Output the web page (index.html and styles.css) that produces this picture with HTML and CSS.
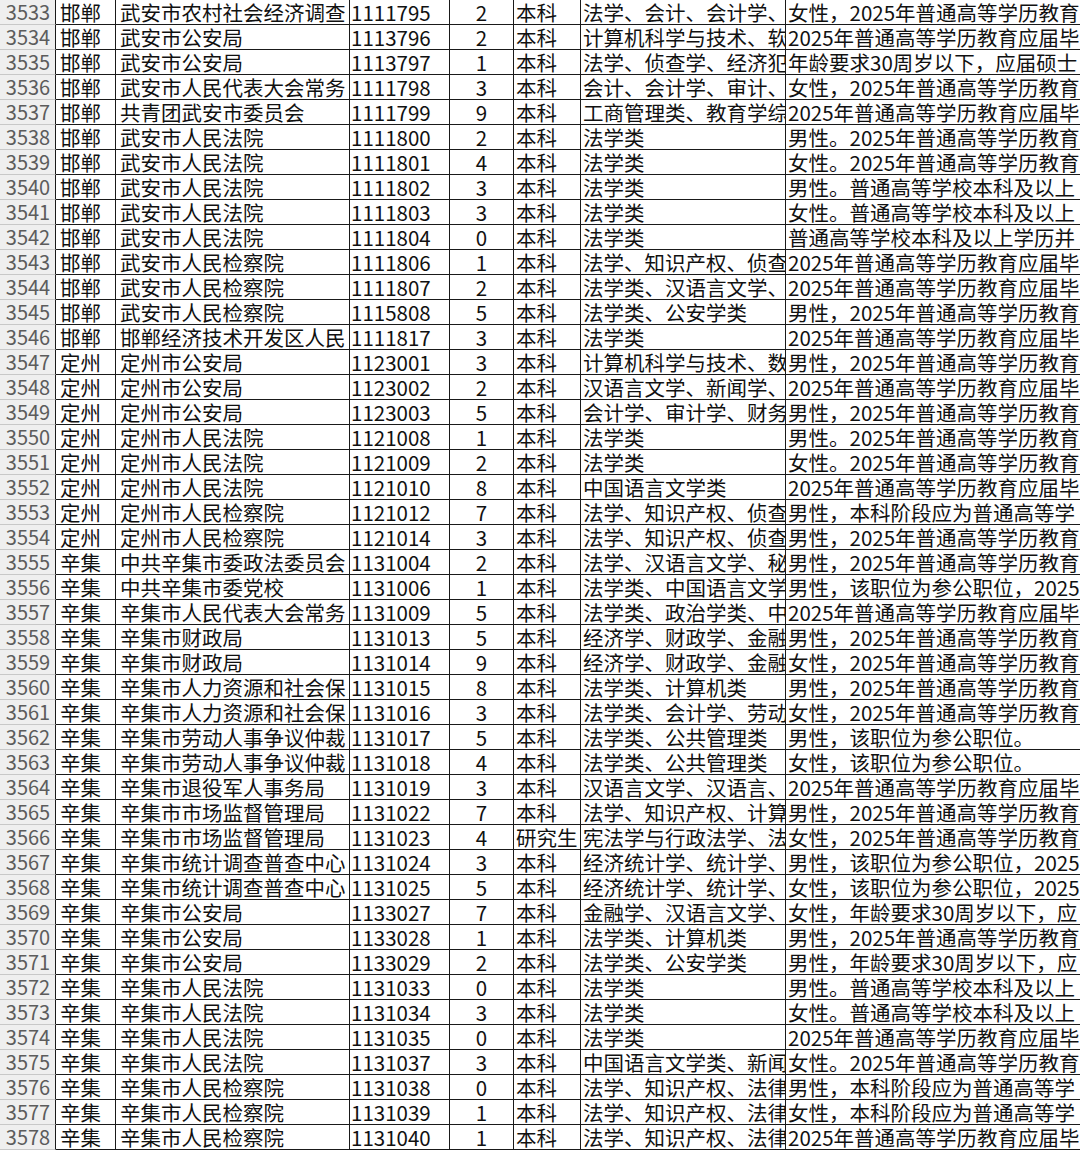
FILE: index.html
```html
<!DOCTYPE html>
<html lang="zh-CN">
<head>
<meta charset="utf-8">
<title>表格</title>
<link rel="stylesheet" href="styles.css">
</head>
<body>
<div class="sheet">
<div class="row"><div class="c c0">3533</div><div class="c c1">邯郸</div><div class="c c2">武安市农村社会经济调查</div><div class="c c3">1111795</div><div class="c c4">2</div><div class="c c5">本科</div><div class="c c6">法学、会计、会计学、</div><div class="c c7">女性，2025年普通高等学历教育</div></div>
<div class="row"><div class="c c0">3534</div><div class="c c1">邯郸</div><div class="c c2">武安市公安局</div><div class="c c3">1113796</div><div class="c c4">2</div><div class="c c5">本科</div><div class="c c6">计算机科学与技术、软</div><div class="c c7">2025年普通高等学历教育应届毕</div></div>
<div class="row"><div class="c c0">3535</div><div class="c c1">邯郸</div><div class="c c2">武安市公安局</div><div class="c c3">1113797</div><div class="c c4">1</div><div class="c c5">本科</div><div class="c c6">法学、侦查学、经济犯</div><div class="c c7">年龄要求30周岁以下，应届硕士</div></div>
<div class="row"><div class="c c0">3536</div><div class="c c1">邯郸</div><div class="c c2">武安市人民代表大会常务</div><div class="c c3">1111798</div><div class="c c4">3</div><div class="c c5">本科</div><div class="c c6">会计、会计学、审计、</div><div class="c c7">女性，2025年普通高等学历教育</div></div>
<div class="row"><div class="c c0">3537</div><div class="c c1">邯郸</div><div class="c c2">共青团武安市委员会</div><div class="c c3">1111799</div><div class="c c4">9</div><div class="c c5">本科</div><div class="c c6">工商管理类、教育学综</div><div class="c c7">2025年普通高等学历教育应届毕</div></div>
<div class="row"><div class="c c0">3538</div><div class="c c1">邯郸</div><div class="c c2">武安市人民法院</div><div class="c c3">1111800</div><div class="c c4">2</div><div class="c c5">本科</div><div class="c c6">法学类</div><div class="c c7">男性。2025年普通高等学历教育</div></div>
<div class="row"><div class="c c0">3539</div><div class="c c1">邯郸</div><div class="c c2">武安市人民法院</div><div class="c c3">1111801</div><div class="c c4">4</div><div class="c c5">本科</div><div class="c c6">法学类</div><div class="c c7">女性。2025年普通高等学历教育</div></div>
<div class="row"><div class="c c0">3540</div><div class="c c1">邯郸</div><div class="c c2">武安市人民法院</div><div class="c c3">1111802</div><div class="c c4">3</div><div class="c c5">本科</div><div class="c c6">法学类</div><div class="c c7">男性。普通高等学校本科及以上</div></div>
<div class="row"><div class="c c0">3541</div><div class="c c1">邯郸</div><div class="c c2">武安市人民法院</div><div class="c c3">1111803</div><div class="c c4">3</div><div class="c c5">本科</div><div class="c c6">法学类</div><div class="c c7">女性。普通高等学校本科及以上</div></div>
<div class="row"><div class="c c0">3542</div><div class="c c1">邯郸</div><div class="c c2">武安市人民法院</div><div class="c c3">1111804</div><div class="c c4">0</div><div class="c c5">本科</div><div class="c c6">法学类</div><div class="c c7">普通高等学校本科及以上学历并</div></div>
<div class="row"><div class="c c0">3543</div><div class="c c1">邯郸</div><div class="c c2">武安市人民检察院</div><div class="c c3">1111806</div><div class="c c4">1</div><div class="c c5">本科</div><div class="c c6">法学、知识产权、侦查</div><div class="c c7">2025年普通高等学历教育应届毕</div></div>
<div class="row"><div class="c c0">3544</div><div class="c c1">邯郸</div><div class="c c2">武安市人民检察院</div><div class="c c3">1111807</div><div class="c c4">2</div><div class="c c5">本科</div><div class="c c6">法学类、汉语言文学、</div><div class="c c7">2025年普通高等学历教育应届毕</div></div>
<div class="row"><div class="c c0">3545</div><div class="c c1">邯郸</div><div class="c c2">武安市人民检察院</div><div class="c c3">1115808</div><div class="c c4">5</div><div class="c c5">本科</div><div class="c c6">法学类、公安学类</div><div class="c c7">男性，2025年普通高等学历教育</div></div>
<div class="row"><div class="c c0">3546</div><div class="c c1">邯郸</div><div class="c c2">邯郸经济技术开发区人民</div><div class="c c3">1111817</div><div class="c c4">3</div><div class="c c5">本科</div><div class="c c6">法学类</div><div class="c c7">2025年普通高等学历教育应届毕</div></div>
<div class="row"><div class="c c0">3547</div><div class="c c1">定州</div><div class="c c2">定州市公安局</div><div class="c c3">1123001</div><div class="c c4">3</div><div class="c c5">本科</div><div class="c c6">计算机科学与技术、数</div><div class="c c7">男性，2025年普通高等学历教育</div></div>
<div class="row"><div class="c c0">3548</div><div class="c c1">定州</div><div class="c c2">定州市公安局</div><div class="c c3">1123002</div><div class="c c4">2</div><div class="c c5">本科</div><div class="c c6">汉语言文学、新闻学、</div><div class="c c7">2025年普通高等学历教育应届毕</div></div>
<div class="row"><div class="c c0">3549</div><div class="c c1">定州</div><div class="c c2">定州市公安局</div><div class="c c3">1123003</div><div class="c c4">5</div><div class="c c5">本科</div><div class="c c6">会计学、审计学、财务</div><div class="c c7">男性，2025年普通高等学历教育</div></div>
<div class="row"><div class="c c0">3550</div><div class="c c1">定州</div><div class="c c2">定州市人民法院</div><div class="c c3">1121008</div><div class="c c4">1</div><div class="c c5">本科</div><div class="c c6">法学类</div><div class="c c7">男性。2025年普通高等学历教育</div></div>
<div class="row"><div class="c c0">3551</div><div class="c c1">定州</div><div class="c c2">定州市人民法院</div><div class="c c3">1121009</div><div class="c c4">2</div><div class="c c5">本科</div><div class="c c6">法学类</div><div class="c c7">女性。2025年普通高等学历教育</div></div>
<div class="row"><div class="c c0">3552</div><div class="c c1">定州</div><div class="c c2">定州市人民法院</div><div class="c c3">1121010</div><div class="c c4">8</div><div class="c c5">本科</div><div class="c c6">中国语言文学类</div><div class="c c7">2025年普通高等学历教育应届毕</div></div>
<div class="row"><div class="c c0">3553</div><div class="c c1">定州</div><div class="c c2">定州市人民检察院</div><div class="c c3">1121012</div><div class="c c4">7</div><div class="c c5">本科</div><div class="c c6">法学、知识产权、侦查</div><div class="c c7">男性，本科阶段应为普通高等学</div></div>
<div class="row"><div class="c c0">3554</div><div class="c c1">定州</div><div class="c c2">定州市人民检察院</div><div class="c c3">1121014</div><div class="c c4">3</div><div class="c c5">本科</div><div class="c c6">法学、知识产权、侦查</div><div class="c c7">男性，2025年普通高等学历教育</div></div>
<div class="row"><div class="c c0">3555</div><div class="c c1">辛集</div><div class="c c2">中共辛集市委政法委员会</div><div class="c c3">1131004</div><div class="c c4">2</div><div class="c c5">本科</div><div class="c c6">法学、汉语言文学、秘</div><div class="c c7">男性，2025年普通高等学历教育</div></div>
<div class="row"><div class="c c0">3556</div><div class="c c1">辛集</div><div class="c c2">中共辛集市委党校</div><div class="c c3">1131006</div><div class="c c4">1</div><div class="c c5">本科</div><div class="c c6">法学类、中国语言文学</div><div class="c c7">男性，该职位为参公职位，2025</div></div>
<div class="row"><div class="c c0">3557</div><div class="c c1">辛集</div><div class="c c2">辛集市人民代表大会常务</div><div class="c c3">1131009</div><div class="c c4">5</div><div class="c c5">本科</div><div class="c c6">法学类、政治学类、中</div><div class="c c7">2025年普通高等学历教育应届毕</div></div>
<div class="row"><div class="c c0">3558</div><div class="c c1">辛集</div><div class="c c2">辛集市财政局</div><div class="c c3">1131013</div><div class="c c4">5</div><div class="c c5">本科</div><div class="c c6">经济学、财政学、金融</div><div class="c c7">男性，2025年普通高等学历教育</div></div>
<div class="row"><div class="c c0">3559</div><div class="c c1">辛集</div><div class="c c2">辛集市财政局</div><div class="c c3">1131014</div><div class="c c4">9</div><div class="c c5">本科</div><div class="c c6">经济学、财政学、金融</div><div class="c c7">女性，2025年普通高等学历教育</div></div>
<div class="row"><div class="c c0">3560</div><div class="c c1">辛集</div><div class="c c2">辛集市人力资源和社会保</div><div class="c c3">1131015</div><div class="c c4">8</div><div class="c c5">本科</div><div class="c c6">法学类、计算机类</div><div class="c c7">男性，2025年普通高等学历教育</div></div>
<div class="row"><div class="c c0">3561</div><div class="c c1">辛集</div><div class="c c2">辛集市人力资源和社会保</div><div class="c c3">1131016</div><div class="c c4">3</div><div class="c c5">本科</div><div class="c c6">法学类、会计学、劳动</div><div class="c c7">女性，2025年普通高等学历教育</div></div>
<div class="row"><div class="c c0">3562</div><div class="c c1">辛集</div><div class="c c2">辛集市劳动人事争议仲裁</div><div class="c c3">1131017</div><div class="c c4">5</div><div class="c c5">本科</div><div class="c c6">法学类、公共管理类</div><div class="c c7">男性，该职位为参公职位。</div></div>
<div class="row"><div class="c c0">3563</div><div class="c c1">辛集</div><div class="c c2">辛集市劳动人事争议仲裁</div><div class="c c3">1131018</div><div class="c c4">4</div><div class="c c5">本科</div><div class="c c6">法学类、公共管理类</div><div class="c c7">女性，该职位为参公职位。</div></div>
<div class="row"><div class="c c0">3564</div><div class="c c1">辛集</div><div class="c c2">辛集市退役军人事务局</div><div class="c c3">1131019</div><div class="c c4">3</div><div class="c c5">本科</div><div class="c c6">汉语言文学、汉语言、</div><div class="c c7">2025年普通高等学历教育应届毕</div></div>
<div class="row"><div class="c c0">3565</div><div class="c c1">辛集</div><div class="c c2">辛集市市场监督管理局</div><div class="c c3">1131022</div><div class="c c4">7</div><div class="c c5">本科</div><div class="c c6">法学、知识产权、计算</div><div class="c c7">男性，2025年普通高等学历教育</div></div>
<div class="row"><div class="c c0">3566</div><div class="c c1">辛集</div><div class="c c2">辛集市市场监督管理局</div><div class="c c3">1131023</div><div class="c c4">4</div><div class="c c5">研究生</div><div class="c c6">宪法学与行政法学、法</div><div class="c c7">女性，2025年普通高等学历教育</div></div>
<div class="row"><div class="c c0">3567</div><div class="c c1">辛集</div><div class="c c2">辛集市统计调查普查中心</div><div class="c c3">1131024</div><div class="c c4">3</div><div class="c c5">本科</div><div class="c c6">经济统计学、统计学、</div><div class="c c7">男性，该职位为参公职位，2025</div></div>
<div class="row"><div class="c c0">3568</div><div class="c c1">辛集</div><div class="c c2">辛集市统计调查普查中心</div><div class="c c3">1131025</div><div class="c c4">5</div><div class="c c5">本科</div><div class="c c6">经济统计学、统计学、</div><div class="c c7">女性，该职位为参公职位，2025</div></div>
<div class="row"><div class="c c0">3569</div><div class="c c1">辛集</div><div class="c c2">辛集市公安局</div><div class="c c3">1133027</div><div class="c c4">7</div><div class="c c5">本科</div><div class="c c6">金融学、汉语言文学、</div><div class="c c7">女性，年龄要求30周岁以下，应</div></div>
<div class="row"><div class="c c0">3570</div><div class="c c1">辛集</div><div class="c c2">辛集市公安局</div><div class="c c3">1133028</div><div class="c c4">1</div><div class="c c5">本科</div><div class="c c6">法学类、计算机类</div><div class="c c7">男性，2025年普通高等学历教育</div></div>
<div class="row"><div class="c c0">3571</div><div class="c c1">辛集</div><div class="c c2">辛集市公安局</div><div class="c c3">1133029</div><div class="c c4">2</div><div class="c c5">本科</div><div class="c c6">法学类、公安学类</div><div class="c c7">男性，年龄要求30周岁以下，应</div></div>
<div class="row"><div class="c c0">3572</div><div class="c c1">辛集</div><div class="c c2">辛集市人民法院</div><div class="c c3">1131033</div><div class="c c4">0</div><div class="c c5">本科</div><div class="c c6">法学类</div><div class="c c7">男性。普通高等学校本科及以上</div></div>
<div class="row"><div class="c c0">3573</div><div class="c c1">辛集</div><div class="c c2">辛集市人民法院</div><div class="c c3">1131034</div><div class="c c4">3</div><div class="c c5">本科</div><div class="c c6">法学类</div><div class="c c7">女性。普通高等学校本科及以上</div></div>
<div class="row"><div class="c c0">3574</div><div class="c c1">辛集</div><div class="c c2">辛集市人民法院</div><div class="c c3">1131035</div><div class="c c4">0</div><div class="c c5">本科</div><div class="c c6">法学类</div><div class="c c7">2025年普通高等学历教育应届毕</div></div>
<div class="row"><div class="c c0">3575</div><div class="c c1">辛集</div><div class="c c2">辛集市人民法院</div><div class="c c3">1131037</div><div class="c c4">3</div><div class="c c5">本科</div><div class="c c6">中国语言文学类、新闻</div><div class="c c7">女性。2025年普通高等学历教育</div></div>
<div class="row"><div class="c c0">3576</div><div class="c c1">辛集</div><div class="c c2">辛集市人民检察院</div><div class="c c3">1131038</div><div class="c c4">0</div><div class="c c5">本科</div><div class="c c6">法学、知识产权、法律</div><div class="c c7">男性，本科阶段应为普通高等学</div></div>
<div class="row"><div class="c c0">3577</div><div class="c c1">辛集</div><div class="c c2">辛集市人民检察院</div><div class="c c3">1131039</div><div class="c c4">1</div><div class="c c5">本科</div><div class="c c6">法学、知识产权、法律</div><div class="c c7">女性，本科阶段应为普通高等学</div></div>
<div class="row"><div class="c c0">3578</div><div class="c c1">辛集</div><div class="c c2">辛集市人民检察院</div><div class="c c3">1131040</div><div class="c c4">1</div><div class="c c5">本科</div><div class="c c6">法学、知识产权、法律</div><div class="c c7">2025年普通高等学历教育应届毕</div></div>
</div>
</body>
</html>
```

FILE: styles.css
```css
html, body {
  margin: 0;
  padding: 0;
  background: #ffffff;
  overflow: hidden;
}
body {
  font-family: "Noto Sans CJK SC", "Noto Sans", sans-serif;
  font-size: 20.5px;
  color: #111111;
}
.sheet {
  width: 1080px;
  display: flex;
  flex-direction: column;
  overflow: hidden;
}
.row {
  display: flex;
  height: 25px;
}
.c {
  box-sizing: border-box;
  height: 25px;
  line-height: 24px;
  white-space: nowrap;
  overflow: hidden;
  padding-left: 3px;
  border-right: 1px solid #1a1a1a;
  border-bottom: 1px solid #1a1a1a;
  flex: none;
}
.c0 {
  width: 56px;
  padding-left: 1px;
  text-align: center;
  font-size: 20px;
  background: #efefef;
  color: #5c5c5c;
  border-bottom-color: #c8c8c8;
  border-right-color: #1a1a1a;
}
.c1 { width: 60px; padding-left: 4px; }
.c2 { width: 234px; padding-left: 4px; }
.c3 { width: 100px; padding-left: 1px; }
.c4 { width: 64px; padding-left: 0; text-align: center; }
.c5 { width: 67px; padding-left: 2px; }
.c6 { width: 205px; padding-left: 2px; }
.c7 { flex: 1 1 auto; min-width: 0; padding-left: 2px; border-right: none; }
```
